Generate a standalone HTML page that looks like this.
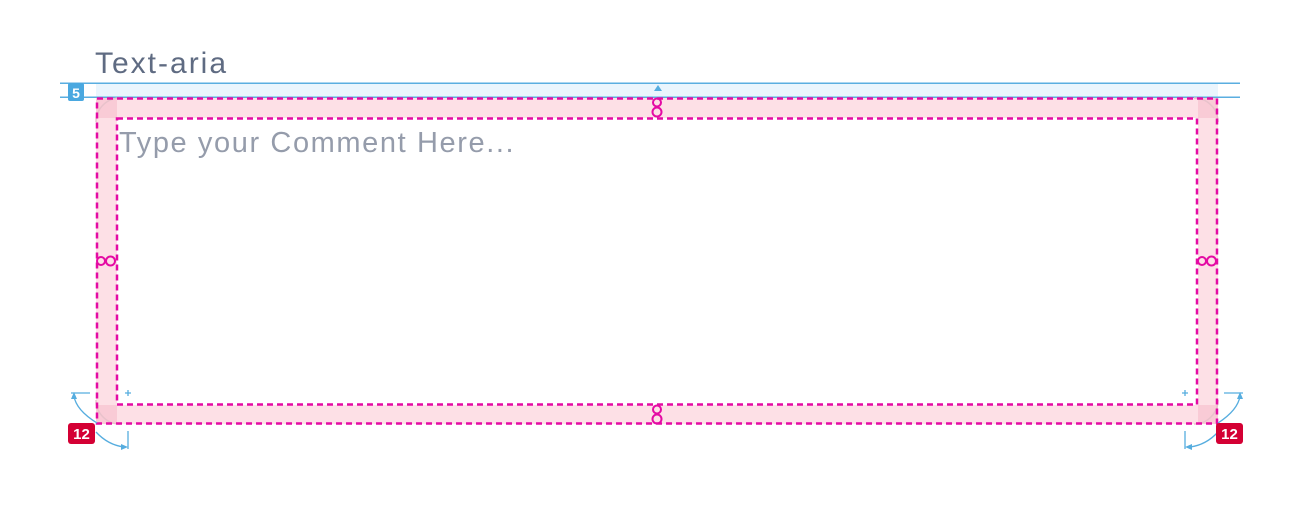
<!DOCTYPE html>
<html><head><meta charset="utf-8"><style>
html,body{margin:0;padding:0;background:#fff;width:1306px;height:512px;overflow:hidden}
svg{position:absolute;left:0;top:0}
</style></head><body>
<svg width="1306" height="512" xmlns="http://www.w3.org/2000/svg" font-family="Liberation Sans, sans-serif">
<text x="95" y="73" font-size="30" fill="#5f6b82" letter-spacing="2">Text-aria</text>
<!-- blue band -->
<rect x="96" y="84" width="1122" height="13" fill="#eaf5fd"/>
<rect x="60" y="82.5" width="1180" height="1.5" fill="#5aaee0"/>
<rect x="60" y="96.5" width="1180" height="1.5" fill="#5aaee0"/>
<rect x="68" y="83" width="16" height="18" rx="2" fill="#4aa8e0"/>
<text x="76" y="98" font-size="14" font-weight="bold" fill="#fff" text-anchor="middle">5</text>
<path d="M654 91 L658 85 L662 91 Z" fill="#56addf"/>
<!-- padding band -->
<path d="M96 98 H1218 V424 H96 Z M117 118 V405 H1198 V118 Z" fill="#fde0e6" fill-rule="evenodd"/>
<g fill="#f9cbd6">
<rect x="96" y="98" width="21" height="20"/><rect x="1198" y="98" width="20" height="20"/>
<rect x="96" y="405" width="21" height="19"/><rect x="1198" y="405" width="20" height="19"/>
</g>
<path d="M96 122 A24 24 0 0 1 120 98" fill="none" stroke="#e8c2cb" stroke-width="1.5"/>
<path d="M1194 98 A24 24 0 0 1 1218 122" fill="none" stroke="#e8c2cb" stroke-width="1.5"/>
<path d="M96 400 A24 24 0 0 0 120 424" fill="none" stroke="#e8c2cb" stroke-width="1.5"/>
<path d="M1194 424 A24 24 0 0 0 1218 400" fill="none" stroke="#e8c2cb" stroke-width="1.5"/>
<rect x="97" y="98.5" width="1120" height="325" fill="none" stroke="#e40ba4" stroke-width="2.5" stroke-dasharray="6,4"/>
<rect x="117" y="118.5" width="1080" height="286" fill="none" stroke="#e40ba4" stroke-width="2.5" stroke-dasharray="6,4"/>
<text x="119" y="152" font-size="29" fill="#959cab" letter-spacing="1.6">Type your Comment Here...</text>
<g fill="none" stroke="#e40ba4" stroke-width="2">
<circle cx="657" cy="102.5" r="4"/><circle cx="657" cy="112" r="4.5"/>
<circle cx="657" cy="409.5" r="4"/><circle cx="657" cy="419" r="4.5"/>
<circle cx="101" cy="261" r="4"/><circle cx="110.5" cy="261" r="4.5"/>
<circle cx="1202" cy="261" r="4"/><circle cx="1211.5" cy="261" r="4.5"/>
</g>
<g stroke="#56addf" stroke-width="1.3" fill="none">
<line x1="71" y1="393" x2="90" y2="393"/>
<path d="M97 423 Q76 410 74 396"/>
<line x1="128" y1="431" x2="128" y2="449"/>
<path d="M96 432 Q108 445 124 447"/>
<line x1="1224" y1="393" x2="1243" y2="393"/>
<path d="M1218 423 Q1238 410 1240 396"/>
<line x1="1185" y1="431" x2="1185" y2="449"/>
<path d="M1218 432 Q1206 445 1190 447"/>
<path d="M125 393 H131 M128 390 V396 M1182 393 H1188 M1185 390 V396"/>
</g>
<g fill="#56addf">
<path d="M74 392 L71 399 L77 399 Z"/>
<path d="M128 447 L121 444 L121 450 Z"/>
<path d="M1240 392 L1237 399 L1243 399 Z"/>
<path d="M1185 447 L1192 444 L1192 450 Z"/>
</g>
<rect x="68" y="423" width="27" height="21" rx="3" fill="#d40034"/>
<text x="81.5" y="439" font-size="15" font-weight="bold" fill="#fff" text-anchor="middle">12</text>
<rect x="1216" y="423" width="27" height="21" rx="3" fill="#d40034"/>
<text x="1229.5" y="439" font-size="15" font-weight="bold" fill="#fff" text-anchor="middle">12</text>
</svg>
</body></html>
